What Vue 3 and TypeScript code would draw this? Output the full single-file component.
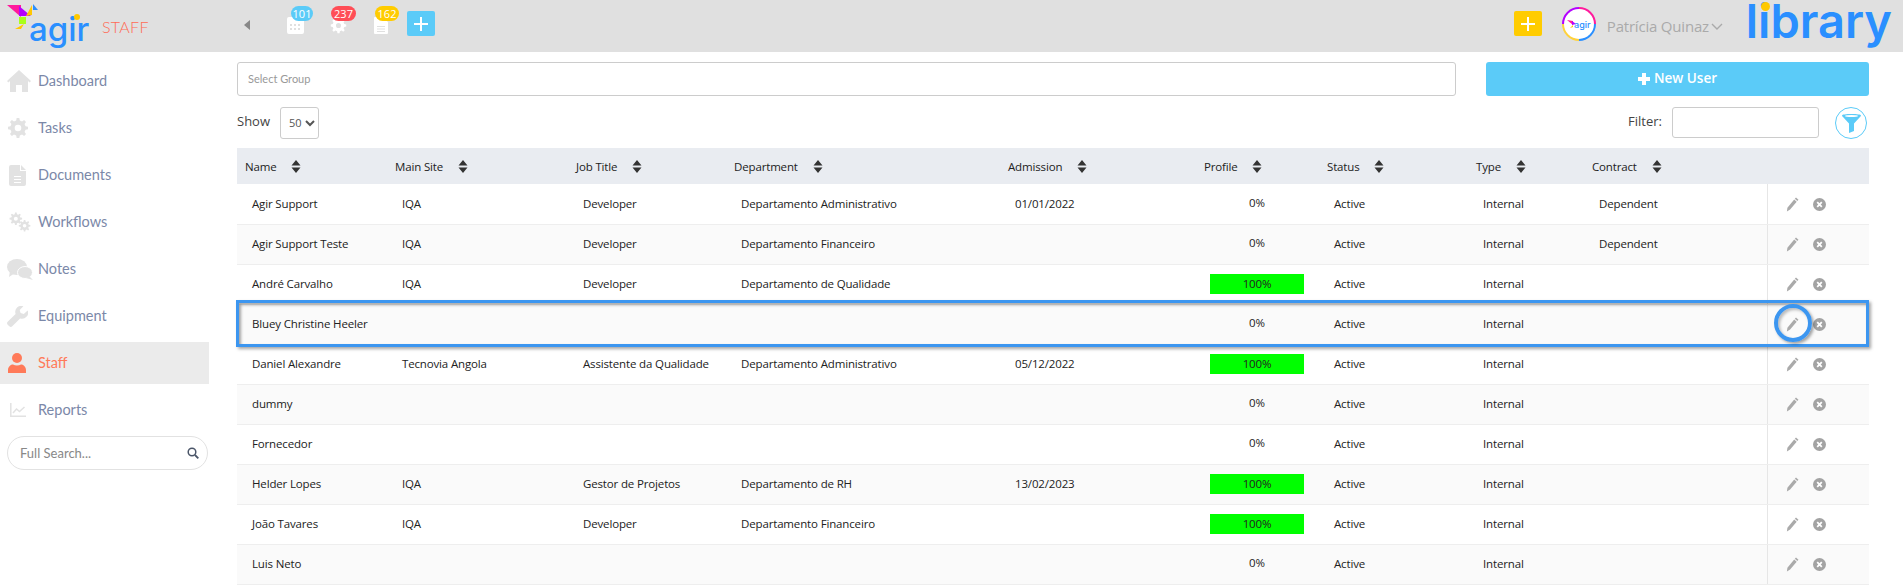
<script setup lang="ts">
function gear(cx: number, cy: number, R: number, r: number, hole: number, teeth = 8): string {
  const pts: string[] = []
  const step = (Math.PI * 2) / teeth
  for (let i = 0; i < teeth; i++) {
    const a = i * step
    const list: [number, number][] = [
      [a - step * 0.3, r],
      [a - step * 0.17, R],
      [a + step * 0.17, R],
      [a + step * 0.3, r],
    ]
    for (const [t, rad] of list) {
      pts.push(`${(cx + Math.cos(t) * rad).toFixed(2)} ${(cy + Math.sin(t) * rad).toFixed(2)}`)
    }
  }
  const ring = `M${pts.join('L')}Z`
  return `${ring}M${cx - hole} ${cy}a${hole} ${hole} 0 1 0 ${hole * 2} 0a${hole} ${hole} 0 1 0 ${-hole * 2} 0Z`
}

const gearOne = gear(12, 12, 11, 8.4, 3.6)
const gearA = gear(8, 8, 7.6, 5.6, 2.4)
const gearB = gear(18.5, 16.5, 7, 5.1, 2.2)

interface NavItem { label: string; icon: string; active?: boolean }
const nav: NavItem[] = [
  { label: 'Dashboard', icon: 'home' },
  { label: 'Tasks', icon: 'gear' },
  { label: 'Documents', icon: 'doc' },
  { label: 'Workflows', icon: 'gears' },
  { label: 'Notes', icon: 'notes' },
  { label: 'Equipment', icon: 'wrench' },
  { label: 'Staff', icon: 'user', active: true },
  { label: 'Reports', icon: 'chart' },
]

const columns = ['Name', 'Main Site', 'Job Title', 'Department', 'Admission', 'Profile', 'Status', 'Type', 'Contract']

interface Row {
  name: string; site: string; job: string; dept: string; date: string
  profile: number; contract: string
}
const rows: Row[] = [
  { name: 'Agir Support', site: 'IQA', job: 'Developer', dept: 'Departamento Administrativo', date: '01/01/2022', profile: 0, contract: 'Dependent' },
  { name: 'Agir Support Teste', site: 'IQA', job: 'Developer', dept: 'Departamento Financeiro', date: '', profile: 0, contract: 'Dependent' },
  { name: 'André Carvalho', site: 'IQA', job: 'Developer', dept: 'Departamento de Qualidade', date: '', profile: 100, contract: '' },
  { name: 'Bluey Christine Heeler', site: '', job: '', dept: '', date: '', profile: 0, contract: '' },
  { name: 'Daniel Alexandre', site: 'Tecnovia Angola', job: 'Assistente da Qualidade', dept: 'Departamento Administrativo', date: '05/12/2022', profile: 100, contract: '' },
  { name: 'dummy', site: '', job: '', dept: '', date: '', profile: 0, contract: '' },
  { name: 'Fornecedor', site: '', job: '', dept: '', date: '', profile: 0, contract: '' },
  { name: 'Helder Lopes', site: 'IQA', job: 'Gestor de Projetos', dept: 'Departamento de RH', date: '13/02/2023', profile: 100, contract: '' },
  { name: 'João Tavares', site: 'IQA', job: 'Developer', dept: 'Departamento Financeiro', date: '', profile: 100, contract: '' },
  { name: 'Luis Neto', site: '', job: '', dept: '', date: '', profile: 0, contract: '' },
]
</script>

<template>
  <div class="app">
    <header class="topbar">
      <div class="logo">
        <svg class="bird" width="40" height="32" viewBox="0 0 40 32">
          <polygon points="7,5 21,5 21,17" fill="#ff1a9c" />
          <polygon points="19,6 31,16 19,16" fill="#b400ff" />
          <polygon points="19,17 26,17 26,24 19,24" fill="#a8ff1a" />
          <polygon points="15,29 24,24 21,29" fill="#ffc800" />
          <polygon points="26,16 32,5 32,15" fill="#ffc800" />
          <polygon points="33,4 38,10 33,10" fill="#2a8fff" />
        </svg>
        <span class="agir">agir<i class="agir-dot"></i></span>
      </div>
      <span class="module">STAFF</span>
      <span class="back"></span>

      <div class="counter c-cal">
        <svg width="17" height="17" viewBox="0 0 17 17">
          <path fill="#fff" fill-rule="evenodd" d="M2 0h13a2 2 0 0 1 2 2v13a2 2 0 0 1-2 2H2a2 2 0 0 1-2-2V2a2 2 0 0 1 2-2ZM3 7v2h2V7ZM7 7v2h2V7ZM11 7v2h2V7ZM3 11v2h2v-2ZM7 11v2h2v-2ZM11 11v2h2v-2Z" />
        </svg>
        <b class="badge blue">101</b>
      </div>
      <div class="counter c-gear">
        <svg width="17" height="17" viewBox="0 0 24 24"><path fill="#fff" fill-rule="evenodd" :d="gearOne" /></svg>
        <b class="badge red">237</b>
      </div>
      <div class="counter c-doc">
        <svg width="14" height="17" viewBox="0 0 14 17">
          <path fill="#fff" fill-rule="evenodd" d="M1 0h8l5 5v11a1 1 0 0 1-1 1H1a1 1 0 0 1-1-1V1a1 1 0 0 1 1-1ZM3 9v1h8V9ZM3 11.5v1h8v-1ZM3 14v1h8v-1Z" />
        </svg>
        <b class="badge yellow">162</b>
      </div>
      <button class="square sky" type="button"><span class="plus"></span></button>

      <div class="top-right">
        <button class="square amber" type="button"><span class="plus"></span></button>
        <div class="avatar">
          <div class="avatar-inner">
            <svg width="10" height="9" viewBox="0 0 10 9">
              <polygon points="0,0 6,1 6,5" fill="#ff1a9c" />
              <polygon points="5,1 9,4 5,5" fill="#b400ff" />
              <polygon points="3,8 6,5 6,7" fill="#ffc800" />
            </svg>
            <span>agir</span>
          </div>
        </div>
        <span class="user-name">Patrícia Quinaz</span>
        <svg class="chev" width="12" height="7" viewBox="0 0 12 7"><path d="M1 1l5 5 5-5" fill="none" stroke="#aaa" stroke-width="1.4" /></svg>
        <span class="library">library<i class="library-dot"></i></span>
      </div>
    </header>

    <div class="body">
      <aside class="sidebar">
        <a v-for="item in nav" :key="item.label" class="nav-item" :class="{ active: item.active }">
          <span class="nav-icon">
            <svg v-if="item.icon === 'home'" width="24" height="22" viewBox="0 0 24 22">
              <path fill="#e2e2e2" d="M12 0 24 11l-1.4 1.4L21 11v11h-6v-7H9v7H3V11l-1.6 1.4L0 11Z" />
            </svg>
            <svg v-else-if="item.icon === 'gear'" width="22" height="22" viewBox="0 0 24 24">
              <path fill="#e2e2e2" fill-rule="evenodd" :d="gearOne" />
            </svg>
            <svg v-else-if="item.icon === 'doc'" width="17" height="21" viewBox="0 0 17 21" style="margin-left:2px">
              <path fill="#e2e2e2" fill-rule="evenodd" d="M2 0h9v6h6v13a2 2 0 0 1-2 2H2a2 2 0 0 1-2-2V2a2 2 0 0 1 2-2ZM12 0l5 5h-5ZM5 11v1h7v-1ZM5 14v1h7v-1ZM5 17v1h7v-1Z" />
            </svg>
            <svg v-else-if="item.icon === 'gears'" width="26" height="20" viewBox="0 0 26 24">
              <path fill="#e2e2e2" fill-rule="evenodd" :d="gearA" />
              <path fill="#e2e2e2" fill-rule="evenodd" :d="gearB" />
            </svg>
            <svg v-else-if="item.icon === 'notes'" width="26" height="21" viewBox="0 0 26 21">
              <ellipse cx="10" cy="8" rx="10" ry="8" fill="#e2e2e2" />
              <path fill="#e2e2e2" d="M3 12 2 18l6-4Z" />
              <ellipse cx="18" cy="13.5" rx="7.5" ry="6" fill="#e2e2e2" stroke="#fff" stroke-width="1" />
              <path fill="#e2e2e2" d="M22 17l4 4-7-2Z" />
            </svg>
            <svg v-else-if="item.icon === 'wrench'" width="21" height="21" viewBox="0 0 21 21">
              <path fill="#e2e2e2" d="M20.6 4.4 16.8 8l-3.2-.9-.9-3.2L16.400.3a6 6 0 0 0-7.800 7.600L.9 15.500a2.400 2.400 0 0 0 0 3.400l1.200 1.200a2.400 2.400 0 0 0 3.400 0l7.600-7.700a6 6 0 0 0 7.500-8Z" />
            </svg>
            <svg v-else-if="item.icon === 'user'" width="18" height="20" viewBox="0 0 18 20" style="margin-left:1px">
              <circle cx="9" cy="5" r="5" fill="#ff7a59" />
              <path fill="#ff7a59" d="M0 20v-3c0-3.500 3-5.500 5-5.500 1.200.6 2.500 1 4 1s2.800-.4 4-1c2 0 5 2 5 5.500v3Z" />
            </svg>
            <svg v-else width="16" height="14" viewBox="0 0 16 14" style="margin-left:3px">
              <path fill="none" stroke="#e2e2e2" stroke-width="1.500" d="M.8 0v13.200H16" />
              <path fill="none" stroke="#e2e2e2" stroke-width="1.500" d="M3 10l3.500-4 3 2.500L14.500 4" />
            </svg>
          </span>
          <span class="nav-label">{{ item.label }}</span>
        </a>
        <div class="search">
          <input class="search-input" type="text" placeholder="Full Search..." />
          <svg width="12" height="12" viewBox="0 0 12 12">
            <circle cx="5" cy="5" r="3.800" fill="none" stroke="#4a5568" stroke-width="1.500" />
            <path d="M8 8l3.300 3.300" stroke="#4a5568" stroke-width="1.800" />
          </svg>
        </div>
      </aside>

      <main class="main">
        <div class="row-top">
          <div class="group-select">Select Group</div>
          <button class="new-user" type="button"><span class="nu-plus"></span>New User</button>
        </div>
        <div class="row-controls">
          <div class="show">
            <label>Show</label>
            <select class="page-size"><option>50</option></select>
          </div>
          <div class="filter">
            <label>Filter:</label>
            <input class="filter-input" type="text" />
            <span class="funnel">
              <svg width="19" height="19" viewBox="0 0 19 19">
                <path fill="#5bcbf8" d="M0 1.500C0 .5 4 0 9.500 0S19 .5 19 1.500c0 .5-.3 1-1 1.400L12 9.500V17l-5 2V9.500L1 2.900C.3 2.500 0 2 0 1.500Z" />
                <ellipse cx="9.500" cy="2" rx="6.500" ry="1" fill="#fff" />
              </svg>
            </span>
          </div>
        </div>

        <div class="table-wrap">
          <table class="users">
            <colgroup>
              <col style="width:150px" /><col style="width:181px" /><col style="width:158px" />
              <col style="width:274px" /><col style="width:196px" /><col style="width:123px" />
              <col style="width:149px" /><col style="width:116px" /><col style="width:183px" /><col style="width:102px" />
            </colgroup>
            <thead>
              <tr>
                <th v-for="c in columns" :key="c">
                  {{ c }}
                  <svg class="sort" width="10" height="13" viewBox="0 0 10 13">
                    <path fill="#333" d="M5 0l4.500 5.500h-9ZM5 13 .5 7.500h9Z" />
                  </svg>
                </th>
                <th></th>
              </tr>
            </thead>
            <tbody>
              <tr v-for="r in rows" :key="r.name">
                <td>{{ r.name }}</td>
                <td>{{ r.site }}</td>
                <td>{{ r.job }}</td>
                <td>{{ r.dept }}</td>
                <td>{{ r.date }}</td>
                <td class="profile">
                  <div class="pct" :class="{ full: r.profile === 100 }">{{ r.profile }}%</div>
                </td>
                <td>Active</td>
                <td>Internal</td>
                <td>{{ r.contract }}</td>
                <td class="actions">
                  <svg width="13" height="15" viewBox="0 0 13 15">
                    <path fill="#aaa" d="M10 .5 12.500 2.700 11.300 4 8.800 1.800ZM8.200 2.600l2.500 2.200-6.600 7.700L.9 14.600l.5-3.900Z" />
                  </svg>
                  <svg width="13" height="13" viewBox="0 0 13 13">
                    <circle cx="6.500" cy="6.500" r="6.500" fill="#a3a3a3" />
                    <path d="M4.200 4.200l4.600 4.600M8.800 4.200 4.200 8.800" stroke="#fff" stroke-width="1.800" />
                  </svg>
                </td>
              </tr>
            </tbody>
          </table>
          <div class="hl-row"></div>
          <div class="hl-circle"></div>
        </div>
      </main>
    </div>
  </div>
</template>

<style>
html, body { margin: 0; padding: 0; overflow: hidden; background: #fff; }
</style>

<style scoped>
.app { width: 1903px; height: 585px; overflow: hidden; font-family: "Open Sans", sans-serif; color: #222; }

.topbar { height: 52px; background: #e0e0e0; display: flex; align-items: center; position: relative; }
.logo { position: relative; width: 95px; height: 52px; flex: none; }
.bird { position: absolute; left: 0; top: 0; }
.agir { position: absolute; left: 29px; top: 9px; font: 500 33px/40px Inter, sans-serif; color: #2a8fff; }
.agir-dot { position: absolute; left: 45px; top: 5px; width: 6px; height: 6px; border-radius: 50%; background: #ffc800; }
.module { margin-left: 7px; width: 142px; flex: none; font: 300 16px "Lato", sans-serif; color: #ff6a55; letter-spacing: 0.3px; }
.back { width: 0; height: 0; flex: none; border: 5px solid transparent; border-right: 6px solid #888; border-left: 0; margin-top: -3px; }

.counter { position: relative; flex: none; display: flex; align-self: flex-start; margin-top: 17px; }
.c-cal { margin-left: 37px; }
.c-gear { margin-left: 26px; }
.c-doc { margin-left: 27px; }
.badge { position: absolute; top: -11px; height: 15px; border-radius: 8px; font: 400 11px/15px "Open Sans", sans-serif; color: #fff; text-align: center; }
.c-cal .badge { left: 4px; width: 22px; }
.c-gear .badge { left: 1px; width: 25px; }
.c-doc .badge { left: 1px; width: 24px; }
.blue { background: #5bcbf8; }
.red { background: #ff4e57; }
.yellow { background: #ffcc00; }

.square { width: 28px; height: 25px; border: 0; padding: 0; border-radius: 2px; display: flex; align-items: center; justify-content: center; flex: none; }
.sky { background: #5bcbf8; margin-left: 19px; margin-top: -5px; }
.amber { background: #ffcc00; margin-top: -5px; }
.plus { position: relative; display: block; width: 14px; height: 14px; }
.plus::before, .plus::after { content: ""; position: absolute; background: #fff; }
.plus::before { left: 6px; top: 0; width: 2px; height: 14px; }
.plus::after { left: 0; top: 6px; width: 14px; height: 2px; }

.top-right { margin-left: auto; display: flex; align-items: center; padding-right: 11px; }
.avatar { width: 34px; height: 34px; margin-left: 20px; border-radius: 50%; background: conic-gradient(#ff1a9c 0 25%, #2a8fff 25% 50%, #ffd23c 50% 75%, #b400ff 75%); display: flex; align-items: center; justify-content: center; margin-top: -4px; }
.avatar-inner { width: 30px; height: 30px; border-radius: 50%; background: #fff; display: flex; align-items: center; justify-content: center; }
.avatar-inner span { font: 500 9px/10px Inter, sans-serif; color: #2a8fff; margin-left: -3px; margin-top: 2px; }
.user-name { margin-left: 11px; font: 15px "Open Sans", sans-serif; letter-spacing: -0.2px; color: #aaa; width: 104px; white-space: nowrap; }
.chev { flex: none; }
.library { position: relative; margin: 0 0 10px 23px; font: 600 47px/42px Inter, sans-serif; color: #2a8fff; white-space: nowrap; }
.library-dot { position: absolute; left: 15.5px; top: 2px; width: 9px; height: 9px; border-radius: 50%; background: #ffc800; }

.body { display: flex; height: 533px; }
.sidebar { width: 209px; flex: none; padding-top: 8px; box-sizing: border-box; }
.nav-item { display: flex; align-items: center; height: 42px; margin-bottom: 5px; padding-left: 7px; box-sizing: border-box; font: 14.500px "Lato", sans-serif; color: #7b88a8; }
.nav-item.active { background: #ebebeb; color: #ff7a59; }
.nav-icon { width: 31px; flex: none; display: flex; align-items: center; }
.nav-label { margin-top: -2px; }
.search { margin-left: 7px; width: 201px; height: 34px; box-sizing: border-box; border: 1px solid #e2e2e2; border-radius: 17px; display: flex; align-items: center; padding: 0 8px 0 12px; }
.search-input { flex: 1; min-width: 0; border: 0; outline: 0; padding: 0; background: transparent; font: 13px "Lato", sans-serif; }
.search-input::placeholder { color: #888; opacity: 1; }

.main { flex: 1; min-width: 0; padding: 10px 34px 0 28px; }
.row-top { display: flex; gap: 30px; height: 34px; }
.group-select { flex: 1; box-sizing: border-box; border: 1px solid #ccc; border-radius: 3px; font: 11px/32px "Lato", sans-serif; color: #999; padding-left: 10px; }
.new-user { width: 383px; flex: none; border: 0; border-radius: 3px; background: #5bcbf8; color: #fff; font: 600 13.500px "Open Sans", sans-serif; display: flex; align-items: center; justify-content: center; gap: 4px; padding: 0 0 2px; }
.nu-plus { position: relative; width: 12px; height: 12px; margin-top: 2px; }
.nu-plus::before, .nu-plus::after { content: ""; position: absolute; background: #fff; }
.nu-plus::before { left: 4px; top: 0; width: 4px; height: 12px; }
.nu-plus::after { left: 0; top: 4px; width: 12px; height: 4px; }

.row-controls { display: flex; justify-content: space-between; align-items: center; margin-top: 10px; height: 33px; }
.show, .filter { display: flex; align-items: center; font-size: 13px; color: #444; }
.show label, .filter label { margin-top: -3px; }
.page-size { margin-left: 10px; width: 39px; height: 32px; box-sizing: border-box; background: #fff; border: 1px solid #ccc; border-radius: 3px; font: 11px "Open Sans", sans-serif; color: #555; padding: 0 0 0 4px; }
.filter-input { margin-left: 10px; width: 147px; height: 31px; box-sizing: border-box; border: 1px solid #ccc; border-radius: 3px; outline: 0; }
.funnel { margin-left: 16px; margin-right: 2px; width: 32px; height: 32px; box-sizing: border-box; border: 1px solid #5bcbf8; border-radius: 50%; display: flex; align-items: center; justify-content: center; padding-top: 2px; }

.table-wrap { position: relative; margin-top: 9px; }
.users { width: 1632px; table-layout: fixed; border-collapse: collapse; font-size: 11.500px; letter-spacing: -0.15px; }
.users th { height: 36px; padding: 0 0 0 8px; background: #e9ecf1; font-weight: 400; text-align: left; color: #222; white-space: nowrap; }
.sort { margin-left: 12px; vertical-align: -2px; }
.users td { height: 40px; box-sizing: border-box; padding: 0 0 1px 15px; border-bottom: 1px solid #eee; white-space: nowrap; }
.users td.profile { padding-bottom: 0; }
.pct { height: 20px; line-height: 20px; text-align: center; width: 94px; margin: -2px 0 0 -1px; }
.pct.full { background: #00ff00; margin-top: 0; line-height: 19px; }
.users tbody tr:nth-child(even) { background: #fafafa; }
.users .actions { border-left: 1px solid #e6e6e6; padding-left: 18px; padding-bottom: 0; }
.actions svg { vertical-align: middle; }
.actions svg + svg { margin-left: 14px; }

.hl-row { position: absolute; left: -1px; top: 152px; width: 1633px; height: 47px; box-sizing: border-box; border: 3px solid #3c96f0; box-shadow: 2px 2px 3px rgba(0,0,0,.35), inset 2px 2px 3px rgba(0,0,0,.35); pointer-events: none; }
.hl-circle { position: absolute; left: 1537px; top: 156px; width: 38px; height: 38px; box-sizing: border-box; border: 4px solid #3c96f0; border-radius: 50%; box-shadow: 2px 2px 3px rgba(0,0,0,.35), inset 2px 2px 3px rgba(0,0,0,.25); pointer-events: none; }
</style>
